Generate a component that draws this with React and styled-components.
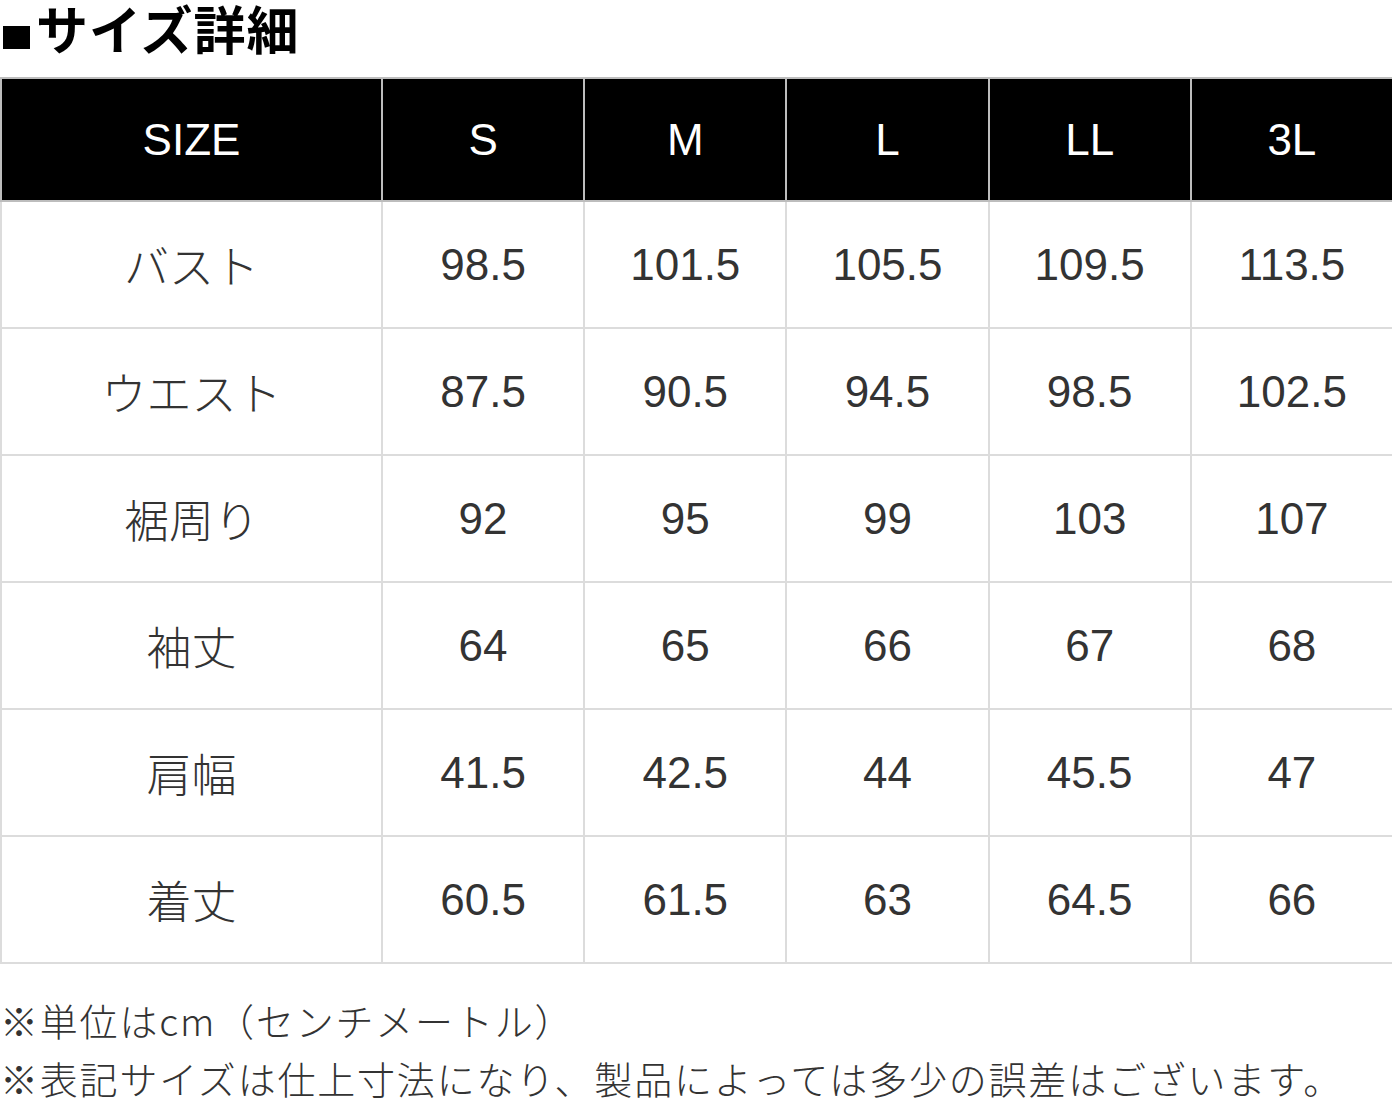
import React from "react";
import styled, { createGlobalStyle } from "styled-components";

const Global = createGlobalStyle`
  html, body { margin: 0; padding: 0; background: #fff; }
  body { font-family: "Liberation Sans", "Noto Sans CJK JP", sans-serif; color: #333; }
`;

const Page = styled.div`
  width: 1392px;
  overflow: hidden;
`;

const Title = styled.h2`
  margin: 0;
  height: 77px;
  display: flex;
  align-items: flex-start;
  font-family: "Noto Sans CJK JP", sans-serif;
  font-weight: 700;
  font-size: 52px;
  line-height: 56px;
  color: #000;
  letter-spacing: 1px;
`;

const Bullet = styled.span`
  display: inline-block;
  width: 27px;
  height: 23px;
  background: #000;
  margin: 26px 6px 0 3px;
  flex: none;
`;

const Table = styled.table`
  width: 1394px;
  border-collapse: collapse;
  table-layout: fixed;
`;

const Head = styled.th`
  background: #000;
  color: #fff;
  height: 121px;
  padding: 0;
  font-family: "Liberation Sans", sans-serif;
  font-weight: 400;
  font-size: 44px;
  text-align: center;
  border: 2px solid #bdbdbd;
  width: ${(p) => (p.$first ? "379px" : "auto")};
`;

const Cell = styled.td`
  height: 125px;
  padding: 0;
  text-align: center;
  border: 2px solid #dcdcdc;
  color: #333;
  font-family: ${(p) =>
    p.$label
      ? '"Noto Sans CJK JP", sans-serif'
      : '"Liberation Sans", sans-serif'};
  font-size: ${(p) => (p.$label ? "45px" : "44px")};
  font-weight: ${(p) => (p.$label ? 300 : 400)};
`;

const Notes = styled.div`
  padding-top: 27px;
  font-family: "Noto Sans CJK JP", sans-serif;
  font-size: 38px;
  font-weight: 300;
  line-height: 58px;
  color: #333;
  white-space: nowrap;
  letter-spacing: 1.8px;
`;

const sizes = ["S", "M", "L", "LL", "3L"];
const rows = [
  ["バスト", "98.5", "101.5", "105.5", "109.5", "113.5"],
  ["ウエスト", "87.5", "90.5", "94.5", "98.5", "102.5"],
  ["裾周り", "92", "95", "99", "103", "107"],
  ["袖丈", "64", "65", "66", "67", "68"],
  ["肩幅", "41.5", "42.5", "44", "45.5", "47"],
  ["着丈", "60.5", "61.5", "63", "64.5", "66"],
];

export default function App() {
  return (
    <Page>
      <Global />
      <Title>
        <Bullet />
        サイズ詳細
      </Title>
      <Table>
        <thead>
          <tr>
            <Head $first>SIZE</Head>
            {sizes.map((s) => (
              <Head key={s}>{s}</Head>
            ))}
          </tr>
        </thead>
        <tbody>
          {rows.map((r) => (
            <tr key={r[0]}>
              {r.map((v, i) => (
                <Cell key={i} $label={i === 0}>
                  {v}
                </Cell>
              ))}
            </tr>
          ))}
        </tbody>
      </Table>
      <Notes>
        <div>※単位はcm（センチメートル）</div>
        <div>※表記サイズは仕上寸法になり、製品によっては多少の誤差はございます。</div>
      </Notes>
    </Page>
  );
}
